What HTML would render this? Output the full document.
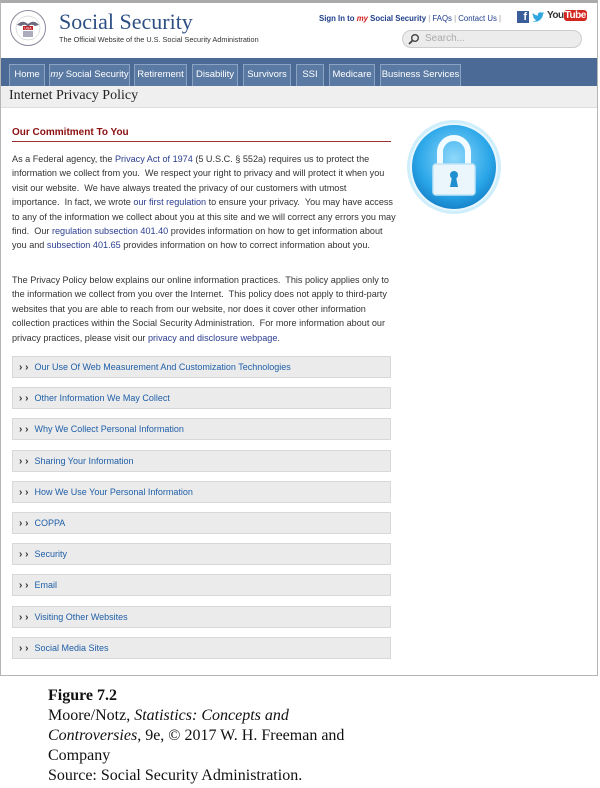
<!DOCTYPE html>
<html><head><style>
*{margin:0;padding:0;box-sizing:border-box}
body{width:600px;height:788px;background:#fff;font-family:"Liberation Sans",Arial,sans-serif;position:relative;overflow:hidden}
.frame{position:absolute;left:0;top:0;width:598px;height:676px;border:1px solid #b5b5b5;border-top:3px solid #aaa;background:#fff}
.abs{position:absolute}
.tab{position:absolute;top:64px;height:22px;background:#5a7aa3;border:1px solid #8aa3c2;border-bottom:none;color:#fff;font-size:9.5px;line-height:20px;text-align:center;white-space:nowrap;overflow:hidden}
.p{position:absolute;left:12px;width:384px;font-size:9.1px;line-height:14.4px;color:#333}
.p a{color:#2a3d8f;text-decoration:none}
.acc{position:absolute;left:12px;width:379px;height:22px;background:#ebebeb;border:1px solid #d8d8d8;font-size:9px;line-height:20px;color:#1f5fa8}
.acc b{color:#333;font-size:10px;margin-left:6px;margin-right:6px;font-weight:900}
.cap{position:absolute;left:48px;font-family:"Liberation Serif",serif;font-size:16px;line-height:20px;color:#111}
</style></head><body>
<div class="frame"></div>
<svg class="abs" style="left:9px;top:9px" width="38" height="38" viewBox="0 0 38 38">
<circle cx="19" cy="19" r="17.5" fill="#fff" stroke="#8a8a9a" stroke-width="1"/>
<circle cx="19" cy="19" r="12" fill="none" stroke="#bbb" stroke-width="0.5"/>
<path d="M8 16 Q13 10 19 15 Q25 10 30 16 L26 17 Q22 14 19 18 Q16 14 12 17Z" fill="#6a6a80"/>
<rect x="14" y="17" width="10" height="4" fill="#c0262c"/>
<text x="19" y="20.5" font-size="3.5" fill="#fff" text-anchor="middle" font-family="Liberation Sans">USA</text>
<path d="M15 22v6M17 22v6M19 22v6M21 22v6M23 22v6" stroke="#5a5a78" stroke-width="1"/>
</svg>
<div class="abs" style="left:59px;top:9px;font-family:'Liberation Serif',serif;font-size:22px;color:#2d4f84">Social Security</div>
<div class="abs" style="left:59px;top:35px;font-size:7.3px;color:#333">The Official Website of the U.S. Social Security Administration</div>
<div class="abs" style="left:319px;top:14px;font-size:7.8px;font-weight:bold;color:#1e3e8a">Sign In to <i style="color:#d02020">my</i> Social Security <span style="color:#999;font-weight:normal">|</span> <span style="font-weight:normal">FAQs</span> <span style="color:#999;font-weight:normal">|</span> <span style="font-weight:normal">Contact Us</span> <span style="color:#999;font-weight:normal">|</span></div>
<div class="abs" style="left:517px;top:11px;width:12px;height:12px;background:#3b5d9a;color:#fff;font-size:11px;font-weight:bold;text-align:right;line-height:13px;padding-right:2px">f</div>
<svg class="abs" style="left:532px;top:12px" width="13" height="11" viewBox="0 0 13 11"><path d="M0 9 Q4 11 8 8 Q11 5 11 2 L13 1 L11 1.5 L12 0 L10 .8 Q8 -.5 6.5 1 Q5.5 2 6 3.5 Q3 3.5 1 1 Q0 3 2 4.5 L1 4.2 Q1.3 6 3 6.5 L2 6.6 Q3 8 4.5 8 Q2.5 9.5 0 9Z" fill="#2ea7e0"/></svg>
<div class="abs" style="left:547px;top:10px;font-size:10px;font-weight:bold;color:#333;letter-spacing:-0.5px">You<span style="background:#d3261f;color:#fff;border-radius:3px;padding:0 1px">Tube</span></div>
<div class="abs" style="left:402px;top:30px;width:180px;height:18px;border-radius:9px;background:#ececec;border:1px solid #ccc;font-size:10px;color:#aaa;line-height:16px;padding-left:22px">Search...</div>
<svg class="abs" style="left:408px;top:33px" width="12" height="12" viewBox="0 0 12 12"><circle cx="7" cy="5" r="3.3" fill="none" stroke="#444" stroke-width="1.4"/><path d="M4.5 7.5 L1 11" stroke="#444" stroke-width="1.8"/></svg>
<div class="abs" style="left:1px;top:58px;width:596px;height:28px;background:#4b6b96"></div>
<div class="tab" style="left:9px;width:36px">Home</div>
<div class="tab" style="left:49px;width:81px"><i>my</i> Social Security</div>
<div class="tab" style="left:134px;width:53px">Retirement</div>
<div class="tab" style="left:192px;width:46px">Disability</div>
<div class="tab" style="left:243px;width:48px">Survivors</div>
<div class="tab" style="left:296px;width:28px">SSI</div>
<div class="tab" style="left:329px;width:46px">Medicare</div>
<div class="tab" style="left:380px;width:81px">Business Services</div>
<div class="abs" style="left:1px;top:86px;width:596px;height:22px;background:#efefef;border-bottom:1px solid #ddd"></div>
<div class="abs" style="left:9px;top:88px;font-family:'Liberation Serif',serif;font-size:14px;color:#222">Internet Privacy Policy</div>
<div class="abs" style="left:12px;top:127px;font-size:10px;font-weight:bold;color:#8b1010">Our Commitment To You</div>
<div class="abs" style="left:12px;top:141px;width:379px;height:1px;background:#9b3030"></div>
<div class="p" style="top:152px">As a Federal agency, the <a>Privacy Act of 1974</a> (5 U.S.C. § 552a) requires us to protect the information we collect from you.&nbsp; We respect your right to privacy and will protect it when you visit our website.&nbsp; We have always treated the privacy of our customers with utmost importance.&nbsp; In fact, we wrote <a>our first regulation</a> to ensure your privacy.&nbsp; You may have access to any of the information we collect about you at this site and we will correct any errors you may find.&nbsp; Our <a>regulation subsection 401.40</a> provides information on how to get information about you and <a>subsection 401.65</a> provides information on how to correct information about you.</div>
<div class="p" style="top:273px">The Privacy Policy below explains our online information practices.&nbsp; This policy applies only to the information we collect from you over the Internet.&nbsp; This policy does not apply to third-party websites that you are able to reach from our website, nor does it cover other information collection practices within the Social Security Administration.&nbsp; For more information about our privacy practices, please visit our <a>privacy and disclosure webpage</a>.</div>
<svg class="abs" style="left:406px;top:119px" width="96" height="96" viewBox="0 0 96 96">
<defs><radialGradient id="g" cx="50%" cy="40%" r="60%"><stop offset="0" stop-color="#8fd8fb"/><stop offset="0.7" stop-color="#2aa6e8"/><stop offset="1" stop-color="#1581c8"/></radialGradient></defs>
<circle cx="48" cy="48" r="47" fill="#cfeefc"/>
<circle cx="48" cy="48" r="43" fill="url(#g)" stroke="#e8f7ff" stroke-width="2"/>
<path d="M34 46 V33 A14 14 0 0 1 62 33 V46" fill="none" stroke="#f2fbff" stroke-width="6"/>
<rect x="27" y="45" width="42" height="31" rx="3" fill="#eaf6fc" stroke="#bfe3f5" stroke-width="1.5"/>
<circle cx="48" cy="56" r="4" fill="#1f8fd0"/><path d="M46 58 L44 68 H52 L50 58Z" fill="#1f8fd0"/>
</svg>
<div class="acc" style="top:356px"><b>›&nbsp;›</b>Our Use Of Web Measurement And Customization Technologies</div>
<div class="acc" style="top:387px"><b>›&nbsp;›</b>Other Information We May Collect</div>
<div class="acc" style="top:418px"><b>›&nbsp;›</b>Why We Collect Personal Information</div>
<div class="acc" style="top:450px"><b>›&nbsp;›</b>Sharing Your Information</div>
<div class="acc" style="top:481px"><b>›&nbsp;›</b>How We Use Your Personal Information</div>
<div class="acc" style="top:512px"><b>›&nbsp;›</b>COPPA</div>
<div class="acc" style="top:543px"><b>›&nbsp;›</b>Security</div>
<div class="acc" style="top:574px"><b>›&nbsp;›</b>Email</div>
<div class="acc" style="top:606px"><b>›&nbsp;›</b>Visiting Other Websites</div>
<div class="acc" style="top:637px"><b>›&nbsp;›</b>Social Media Sites</div>
<div class="cap" style="top:686px;font-weight:bold">Figure 7.2</div>
<div class="cap" style="top:706px;width:322px">Moore/Notz, <i>Statistics: Concepts and Controversies</i>, 9e, © 2017 W. H. Freeman and Company<br>Source: Social Security Administration.</div>
</body></html>
